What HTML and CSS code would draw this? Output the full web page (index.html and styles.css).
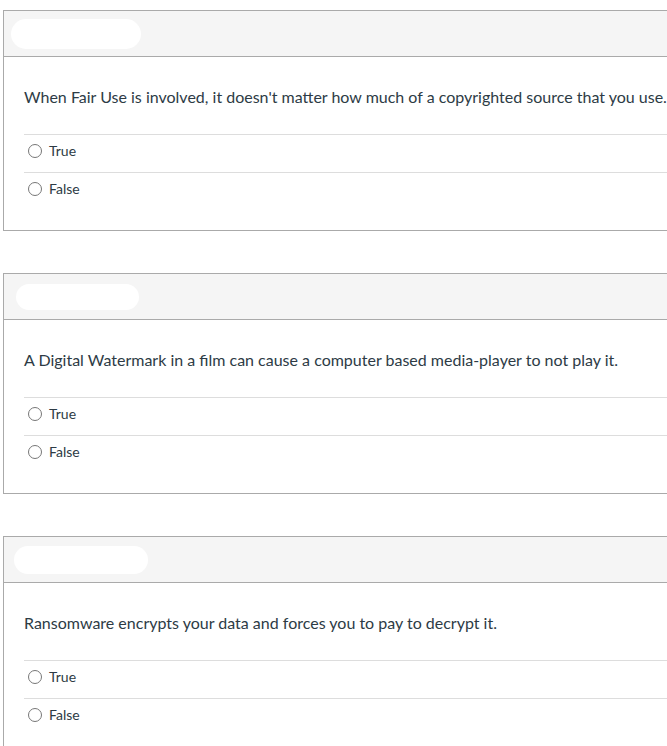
FILE: index.html
```html
<!DOCTYPE html>
<html>
<head>
<meta charset="utf-8">
<link rel="stylesheet" href="styles.css">
</head>
<body>
<div class="page">
  <div class="card">
    <div class="card-header"><span class="blob b1"></span></div>
    <div class="card-body">
      <p class="question">When Fair Use is involved, it doesn't matter how much of a copyrighted source that you use.</p>
      <div class="answer"><span class="radio"></span><span class="label">True</span></div>
      <div class="answer"><span class="radio"></span><span class="label">False</span></div>
    </div>
  </div>
  <div class="card">
    <div class="card-header"><span class="blob b2"></span></div>
    <div class="card-body">
      <p class="question">A Digital Watermark in a film can cause a computer based media-player to not play it.</p>
      <div class="answer"><span class="radio"></span><span class="label">True</span></div>
      <div class="answer"><span class="radio"></span><span class="label">False</span></div>
    </div>
  </div>
  <div class="card">
    <div class="card-header"><span class="blob b3"></span></div>
    <div class="card-body">
      <p class="question">Ransomware encrypts your data and forces you to pay to decrypt it.</p>
      <div class="answer"><span class="radio"></span><span class="label">True</span></div>
      <div class="answer"><span class="radio"></span><span class="label">False</span></div>
    </div>
  </div>
</div>
</body>
</html>
```
FILE: styles.css
```css
html, body {
  margin: 0;
  padding: 0;
  background: #ffffff;
  overflow: hidden;
}
body {
  font-family: Lato, "Noto Sans", sans-serif;
  color: #2d3b45;
}
.page {
  padding: 10px 0 0 3px;
  display: flex;
  flex-direction: column;
  gap: 42px;
}
.card {
  width: 720px;
  border: 1px solid #aaaaaa;
  border-right: none;
}
.card-header {
  height: 45px;
  background: #f5f5f5;
  border-bottom: 1px solid #aaaaaa;
  display: flex;
  align-items: center;
  padding-left: 7px;
}
.blob {
  display: block;
  height: 30px;
  background: #ffffff;
  border-radius: 15px;
}
.b1 { width: 130px; }
.b2 { width: 123px; height: 26px; border-radius: 13px; margin-left: 5px; }
.b3 { width: 134px; height: 28px; border-radius: 14px; margin-left: 3px; }
.card-body {
  padding: 30px 0 20px 20px;
}
.question {
  margin: 0 0 27px 0;
  font-size: 16px;
  line-height: 20px;
  white-space: nowrap;
}
.answer {
  height: 31px;
  padding-bottom: 6px;
  border-top: 1px solid #dddddd;
  display: flex;
  align-items: center;
  font-size: 14px;
}
.radio {
  width: 12px;
  height: 12px;
  border: 1px solid #777777;
  border-radius: 50%;
  margin-left: 4px;
  margin-right: 7px;
  box-sizing: content-box;
}
.label {
  line-height: 16px;
}
```
